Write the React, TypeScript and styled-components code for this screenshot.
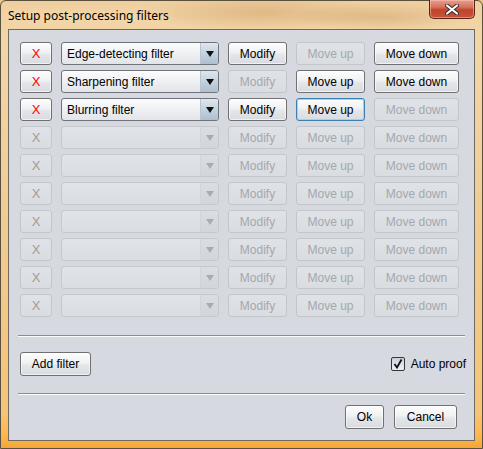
import React from "react";
import styled, { createGlobalStyle, css } from "styled-components";

const GlobalStyle = createGlobalStyle`
  html, body {
    margin: 0;
    padding: 0;
    background: #e9c48e;
  }
  #root {
    width: 483px;
    height: 449px;
  }
`;

const Frame = styled.div`
  box-sizing: border-box;
  width: 483px;
  height: 449px;
  display: flex;
  flex-direction: column;
  padding: 0 7px 7px 7px;
  border: 1px solid #5a5040;
  border-radius: 6px 6px 0 0;
  background:
    radial-gradient(ellipse 120px 18px at 260px 12px, rgba(190, 140, 80, 0.35), transparent),
    radial-gradient(ellipse 90px 14px at 380px 16px, rgba(180, 130, 70, 0.3), transparent),
    linear-gradient(180deg, #efcf9f 0%, #f3d6a8 8%, #f0cc92 50%, #f6c478 92%, #ffb84c 97%, #f4a63a 100%);
  font-family: "Liberation Sans", Arial, sans-serif;
`;

const TitleBar = styled.div`
  height: 28px;
  display: flex;
  justify-content: space-between;
  align-items: flex-start;
`;

const Title = styled.div`
  font-family: "Noto Sans", "Segoe UI", sans-serif;
  font-size: 12px;
  color: #000;
  padding-top: 6px;
  text-shadow: 0 0 8px rgba(255, 240, 210, 0.9);
`;

const CloseButton = styled.div`
  width: 46px;
  height: 19px;
  margin-top: -1px;
  box-sizing: border-box;
  border: 1px solid #5b2418;
  border-top: none;
  border-radius: 0 0 5px 5px;
  background: linear-gradient(180deg, #e8a090 0%, #d4715c 40%, #c0442c 55%, #c85436 100%);
  box-shadow: inset 0 0 0 1px rgba(255, 200, 180, 0.5);
  display: flex;
  align-items: center;
  justify-content: center;
`;

const Client = styled.div`
  flex: 1;
  box-sizing: border-box;
  border: 1px solid #6e6a62;
  background: #d6d9df;
  display: flex;
  flex-direction: column;
`;

const FilterList = styled.div`
  display: flex;
  flex-direction: column;
  gap: 5px;
  padding: 12px 0 0 11px;
`;

const Row = styled.div`
  display: flex;
  gap: 9px;
`;

const Button = styled.div<{
  $w: number;
  $h?: number;
  $disabled?: boolean;
  $focused?: boolean;
  $red?: boolean;
}>`
  box-sizing: border-box;
  width: ${(p) => p.$w}px;
  height: ${(p) => p.$h ?? 23}px;
  border-radius: 3px;
  font-size: 12px;
  display: flex;
  align-items: center;
  justify-content: center;
  ${(p) =>
    p.$disabled
      ? css`
          border: 1px solid #c3c7cc;
          background: linear-gradient(180deg, #dfe2e6, #d9dce1);
          color: #a4a8ad;
        `
      : css`
          border: 1px solid ${p.$focused ? "#3c7fb1" : "#707070"};
          background: linear-gradient(180deg, #fdfdfd 0%, #f0f1f3 45%, #e4e6e9 55%, #d8dbe0 100%);
          color: #000;
          box-shadow: ${p.$focused ? "inset 0 0 0 1px #a8d0ee" : "inset 0 0 0 1px rgba(255,255,255,0.6)"};
        `}
  ${(p) =>
    p.$red &&
    css`
      color: ${p.$disabled ? "#a39d90" : "#ff0000"};
      font-size: 13px;
    `}
`;

const Combo = styled.div<{ $disabled?: boolean }>`
  box-sizing: border-box;
  width: 158px;
  height: 23px;
  border-radius: 3px;
  display: flex;
  overflow: hidden;
  font-size: 12px;
  ${(p) =>
    p.$disabled
      ? css`
          border: 1px solid #c5c9ce;
          background: linear-gradient(180deg, #e0e3e7, #dadde2);
        `
      : css`
          border: 1px solid #6f737a;
          background: linear-gradient(180deg, #fcfcfd 0%, #eff0f2 50%, #e2e4e8 100%);
        `}
`;

const ComboText = styled.div`
  flex: 1;
  display: flex;
  align-items: center;
  padding-left: 5px;
  color: #000;
`;

const ComboArrow = styled.div<{ $disabled?: boolean }>`
  width: 17px;
  display: flex;
  align-items: center;
  justify-content: center;
  ${(p) =>
    p.$disabled
      ? css`
          background: linear-gradient(180deg, #dadee2, #d2d6db);
          border-left: 1px solid #d0d4d8;
        `
      : css`
          background: linear-gradient(180deg, #dfe6ee 0%, #c4d2df 50%, #aebfd0 100%);
          border-left: 1px solid #b9c4cf;
        `}
`;

const Triangle = styled.div<{ $disabled?: boolean }>`
  width: 0;
  height: 0;
  border-left: 4px solid transparent;
  border-right: 4px solid transparent;
  border-top: 6px solid ${(p) => (p.$disabled ? "#a9adb2" : "#111")};
`;

const Separator = styled.div<{ $top: number }>`
  margin: ${(p) => p.$top}px 9px 0 9px;
  height: 1px;
  background: #8b8d90;
  border-bottom: 1px solid #fbfbfc;
`;

const ActionRow = styled.div`
  display: flex;
  align-items: center;
  justify-content: space-between;
  padding: 15px 9px 0 11px;
`;

const CheckLabel = styled.label`
  display: flex;
  align-items: center;
  gap: 6px;
  font-size: 12px;
  color: #000;
  margin-right: -1px;
`;

const CheckBox = styled.span`
  box-sizing: border-box;
  width: 14px;
  height: 14px;
  border: 1px solid #33363a;
  border-radius: 2px;
  background: linear-gradient(180deg, #c8d2dc, #eef1f4);
  display: flex;
  align-items: center;
  justify-content: center;
`;

const Footer = styled.div`
  display: flex;
  justify-content: flex-end;
  gap: 10px;
  padding: 10px 17px 0 0;
`;

type Filter = { name: string; up: boolean; down: boolean; modify: boolean; focused?: boolean };

const filters: Filter[] = [
  { name: "Edge-detecting filter", up: false, down: true, modify: true },
  { name: "Sharpening filter", up: true, down: true, modify: false },
  { name: "Blurring filter", up: true, down: false, modify: true, focused: true },
];

function FilterRow({ filter }: { filter?: Filter }) {
  const off = !filter;
  return (
    <Row>
      <Button $w={32} $red $disabled={off}>
        X
      </Button>
      <Combo $disabled={off}>
        <ComboText>{filter?.name}</ComboText>
        <ComboArrow $disabled={off}>
          <Triangle $disabled={off} />
        </ComboArrow>
      </Combo>
      <Button $w={59} $disabled={off || !filter.modify}>
        Modify
      </Button>
      <Button $w={69} $disabled={off || !filter.up} $focused={filter?.focused}>
        Move up
      </Button>
      <Button $w={85} $disabled={off || !filter.down}>
        Move down
      </Button>
    </Row>
  );
}

export default function App() {
  const rows = Array.from({ length: 10 }, (_, i) => filters[i]);
  return (
    <>
      <GlobalStyle />
      <Frame>
        <TitleBar>
          <Title>Setup post-processing filters</Title>
          <CloseButton>
            <svg width="14" height="11" viewBox="0 0 14 11">
              <path
                d="M2 1.5 L12 9.5 M12 1.5 L2 9.5"
                stroke="#3a2a28"
                strokeWidth="4"
                strokeLinecap="round"
              />
              <path
                d="M2 1.5 L12 9.5 M12 1.5 L2 9.5"
                stroke="#ffffff"
                strokeWidth="2.2"
                strokeLinecap="round"
              />
            </svg>
          </CloseButton>
        </TitleBar>
        <Client>
          <FilterList>
            {rows.map((f, i) => (
              <FilterRow key={i} filter={f} />
            ))}
          </FilterList>
          <Separator $top={18} />
          <ActionRow>
            <Button $w={71} $h={24}>
              Add filter
            </Button>
            <CheckLabel>
              <CheckBox>
                <svg width="10" height="10" viewBox="0 0 10 10">
                  <path d="M1.5 5 L4 8.5 L8.5 0.5" stroke="#111" strokeWidth="1.8" fill="none" />
                </svg>
              </CheckBox>
              Auto proof
            </CheckLabel>
          </ActionRow>
          <Separator $top={17} />
          <Footer>
            <Button $w={39} $h={24}>
              Ok
            </Button>
            <Button $w={63} $h={24}>
              Cancel
            </Button>
          </Footer>
        </Client>
      </Frame>
    </>
  );
}
